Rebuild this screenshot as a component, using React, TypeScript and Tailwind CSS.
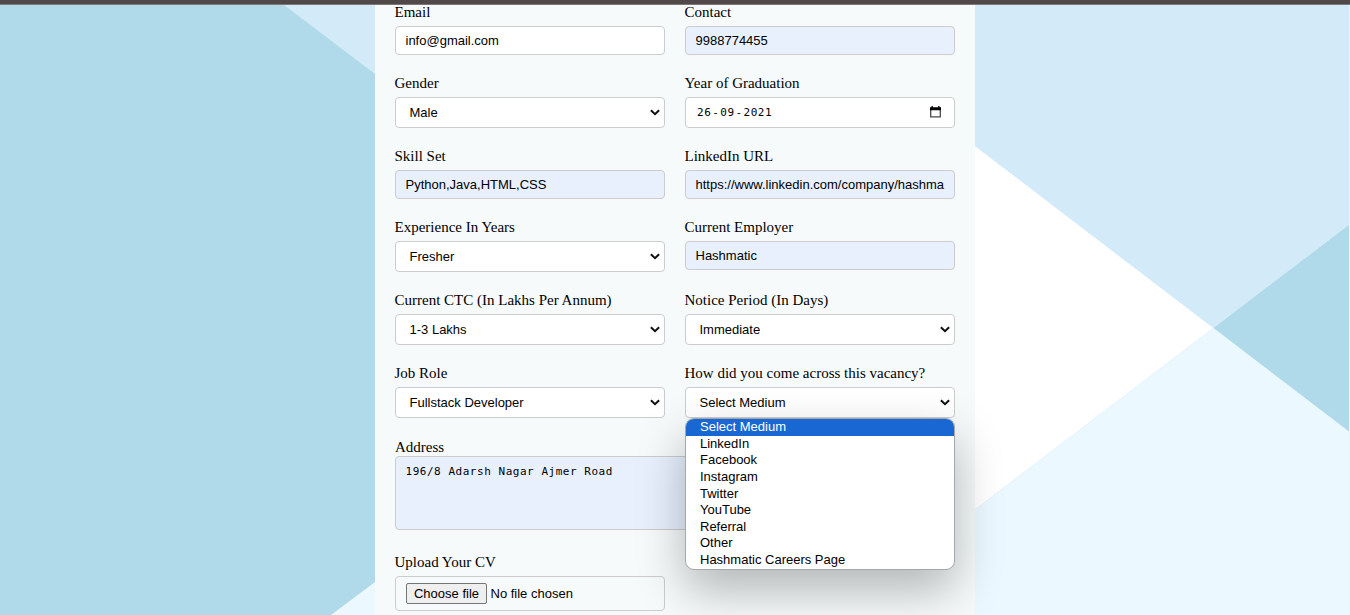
import type { ReactNode } from "react";

const MEDIUMS = [
  "Select Medium",
  "LinkedIn",
  "Facebook",
  "Instagram",
  "Twitter",
  "YouTube",
  "Referral",
  "Other",
  "Hashmatic Careers Page",
];

function Label({ children }: { children: ReactNode }) {
  return <div className="-ml-[0.5px] mb-[6px] h-4 text-[15px] leading-4 whitespace-nowrap">{children}</div>;
}

function TextField({ label, value, filled = true }: { label: string; value: string; filled?: boolean }) {
  return (
    <div>
      <Label>{label}</Label>
      <input
        type="text"
        defaultValue={value}
        className={
          "block h-[29px] w-full rounded-[4px] border border-[#ccc] px-[9.5px] font-['Liberation_Sans',Arial,sans-serif] text-[13px] text-black outline-none " +
          (filled ? "bg-[#e8f0fe]" : "bg-white")
        }
      />
    </div>
  );
}

function SelectField({ label, value, children }: { label: string; value: string; children?: ReactNode }) {
  return (
    <div className="relative">
      <Label>{label}</Label>
      <select className="block h-[31px] w-full appearance-none rounded-[4px] border border-[#ccc] bg-white px-[13.5px] font-['Liberation_Sans',Arial,sans-serif] text-[13px] text-black outline-none">
        <option>{value}</option>
      </select>
      <svg
        className="pointer-events-none absolute right-[5px] bottom-[12px]"
        width="10"
        height="7"
        viewBox="0 0 10 7"
        fill="none"
        stroke="#101010"
        strokeWidth="2"
      >
        <path d="M0.900 1.200L5 5.200L9.100 1.200" />
      </svg>
      {children}
    </div>
  );
}

function MediumMenu() {
  return (
    <ul className="absolute top-[53px] left-0 z-10 w-[270px] overflow-hidden rounded-[9px] border border-[#a5a7a9] bg-white font-['Liberation_Sans',Arial,sans-serif] text-[13px] shadow-[0_20px_48px_rgba(0,0,0,0.28)]">
      {MEDIUMS.map((m, i) => (
        <li
          key={m}
          className={"h-[16.65px] pl-[14px] leading-[16.4px] " + (i === 0 ? "bg-[#1967d2] text-white" : "text-black")}
        >
          {m}
        </li>
      ))}
    </ul>
  );
}

function DateField() {
  return (
    <div>
      <Label>Year of Graduation</Label>
      <div className="flex h-[31px] items-center justify-between rounded-[4px] border border-[#ccc] bg-white pr-[13px] pl-[11px] font-['DejaVu_Sans_Mono',monospace] text-[11px] tracking-[0.53px]">
        <div className="flex gap-[0.9px] pt-[2px]">
          <span>26</span>
          <span>-</span>
          <span>09</span>
          <span>-</span>
          <span>2021</span>
        </div>
        <svg width="11" height="12" viewBox="0 0 11 12" className="mb-px">
          <path d="M0.700 2.500V10.800H10.300V2.500" fill="none" stroke="#4a4a4a" strokeWidth="1.3" />
          <path d="M0 1.200h11v3H0z M1.500 0h1.300v1.500H1.500z M8.200 0h1.300v1.500H8.200z" fill="#000" />
        </svg>
      </div>
    </div>
  );
}

function Background() {
  return (
    <svg className="absolute inset-0" width="1350" height="615" viewBox="0 0 1350 615">
      <rect width="1350" height="615" fill="#b0daea" />
      <path d="M277.500 0H1349V225L1213 328L975 146.500L600 240L375 74Z" fill="#d3ebf9" />
      <path d="M700 0L975 146L1213.500 328L975 509.500L700 400Z" fill="#fff" />
      <path d="M975 0H1349V224.500L1213.500 328L975 146Z" fill="#d3ebf9" />
      <path d="M331 615L375 582L975 509.500L1213.500 328L1349 431.500V615Z" fill="#ecf8ff" />
      <rect x="1349" width="1" height="615" fill="#e9f3f8" />
    </svg>
  );
}

export default function App() {
  return (
    <div className="relative h-[615px] w-[1350px] overflow-hidden font-['Liberation_Serif','Times_New_Roman',serif] text-black">
      <Background />
      <main className="relative mx-auto h-[615px] w-[600px] bg-[#f6fafb] px-5 pt-1">
        <div className="grid grid-cols-2 gap-x-5 gap-y-5">
          <TextField label="Email" value="info@gmail.com" filled={false} />
          <TextField label="Contact" value="9988774455" />
          <SelectField label="Gender" value="Male" />
          <DateField />
          <TextField label="Skill Set" value="Python,Java,HTML,CSS" />
          <TextField label="LinkedIn URL" value="https://www.linkedin.com/company/hashma" />
          <SelectField label="Experience In Years" value="Fresher" />
          <TextField label="Current Employer" value="Hashmatic" />
          <SelectField label="Current CTC (In Lakhs Per Annum)" value="1-3 Lakhs" />
          <SelectField label="Notice Period (In Days)" value="Immediate" />
          <SelectField label="Job Role" value="Fullstack Developer" />
          <SelectField label="How did you come across this vacancy?" value="Select Medium">
            <MediumMenu />
          </SelectField>
        </div>
        <div className="mt-[21px] text-[15px] leading-[17px]">Address</div>
        <textarea
          defaultValue="196/8 Adarsh Nagar Ajmer Road"
          className="block h-[74px] w-full resize-none rounded-[4px] border border-[#ccc] bg-[#e8f0fe] px-[9.500px] py-[7px] font-['DejaVu_Sans_Mono',monospace] text-[11px] leading-[15px] tracking-[0.53px] outline-none"
        />
        <div className="mt-6 w-[270px]">
          <Label>Upload Your CV</Label>
          <div className="flex h-[35px] items-center gap-1 rounded-[4px] border border-[#ccc] px-[10px] font-['Liberation_Sans',Arial,sans-serif] text-[13px]">
            <button className="h-[21px] w-[81px] rounded-[2px] border border-[#767676] bg-[#efefef] leading-[19px]">
              Choose file
            </button>
            <span className="-ml-[0.5px]">No file chosen</span>
          </div>
        </div>
      </main>
      <div className="absolute inset-x-0 top-0 z-20 h-[5px] border-b border-[#7d7778] bg-[#504849]" />
    </div>
  );
}
